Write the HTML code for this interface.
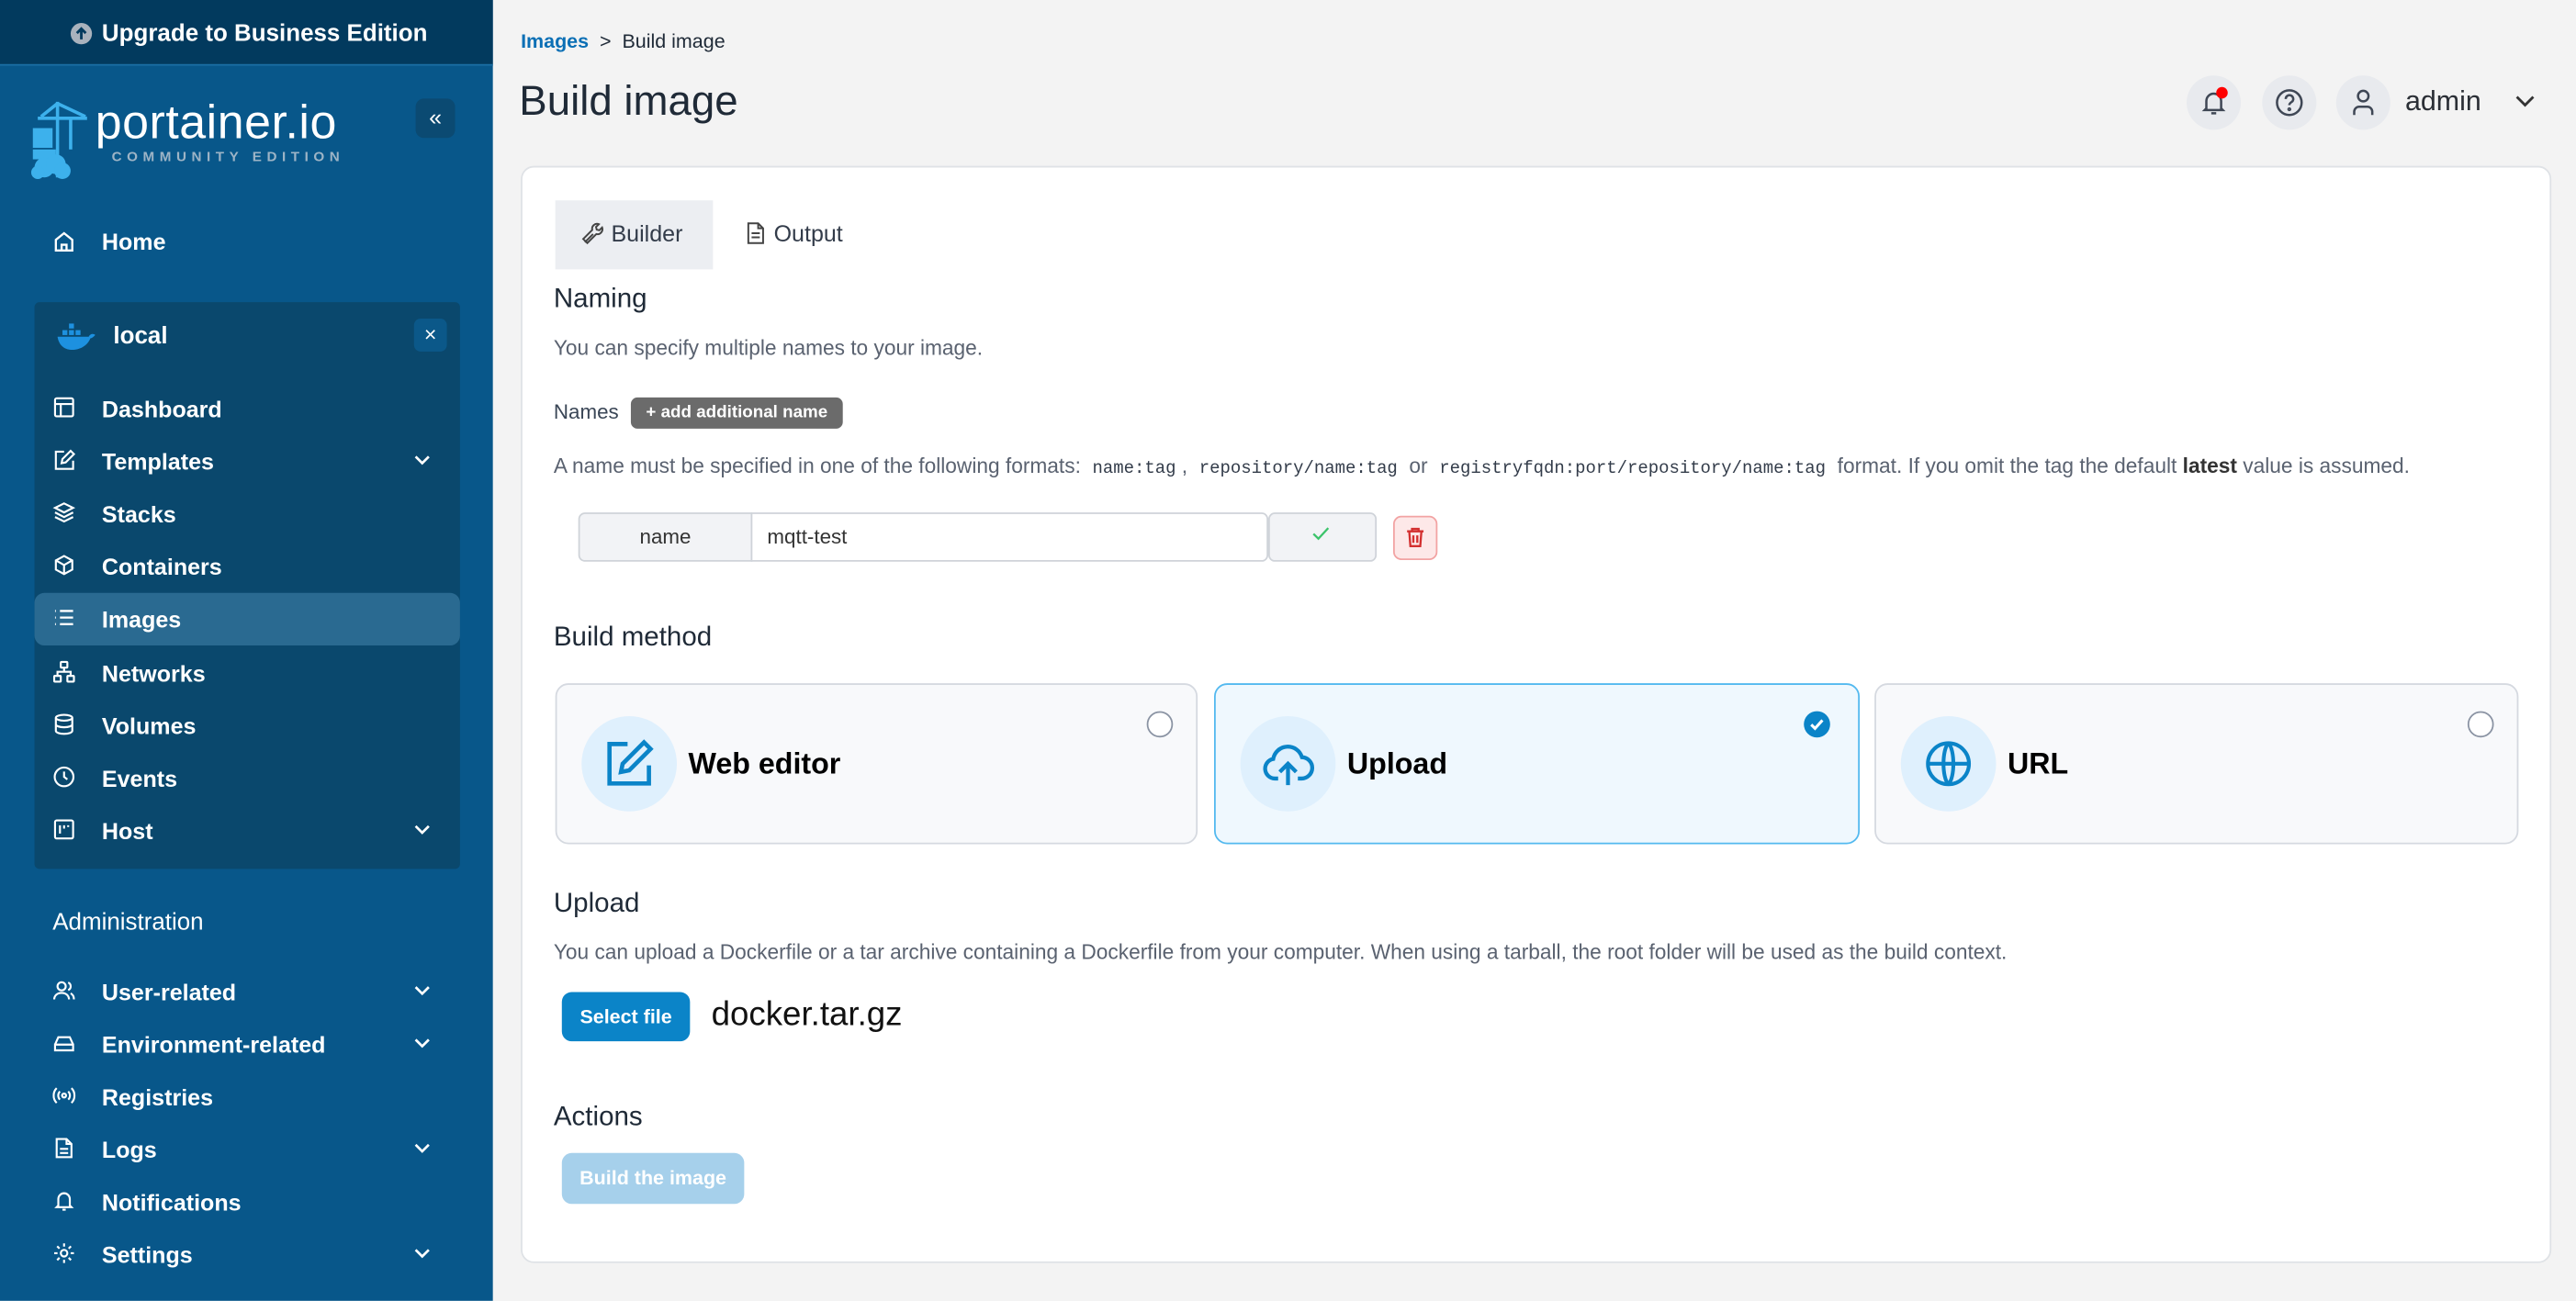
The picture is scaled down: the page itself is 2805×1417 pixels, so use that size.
<!DOCTYPE html>
<html><head><meta charset="utf-8">
<style>
*{box-sizing:border-box;margin:0;padding:0}
html,body{width:2805px;height:1416px;overflow:hidden;background:#f3f3f3;font-family:"Liberation Sans",Arial,sans-serif}
#w{position:absolute;left:0;top:0;width:1568px;height:792px;transform:scale(1.78890);transform-origin:0 0;background:#f3f3f3}
.a{position:absolute}
.t{position:absolute;white-space:nowrap;line-height:20px}
.sb{left:0;top:0;width:300px;height:792px;background:#08578a}
.nav{color:#fff;font-size:14px;font-weight:bold;left:62px}
.ic{position:absolute;left:32px;width:14px;height:14px}
.chev{position:absolute;left:251px;width:12px;height:12px}
.h{color:#1f2a37;font-size:16.5px}
.d{color:#5a6270;font-size:12.7px}
.mono{font-family:"Liberation Mono",monospace;color:#333c4a;font-size:10.6px}
.card{position:absolute;top:416px;height:98px;border:1px solid #d5d9e0;border-radius:8px;background:#f8f9fb}
.circ{position:absolute;left:15px;top:19px;width:58px;height:58px;border-radius:50%;background:#dff0fd}
.ctext{position:absolute;left:80px;top:37px;font-size:18px;font-weight:bold;color:#000;line-height:22px}
.radio{position:absolute;right:14px;top:16px;width:16px;height:16px;border-radius:50%;border:1px solid #8a93a3;background:#fff}
.hb{position:absolute;top:46px;width:33px;height:33px;border-radius:50%;background:#e8eaee}
</style></head><body><div id="w">

<!-- SIDEBAR -->
<div class="a sb"></div>
<div class="a" style="left:0;top:0;width:300px;height:40px;background:#023a5e;border-bottom:1px solid #1b6fa6"></div>
<div class="a" style="left:43px;top:14px;width:13px;height:13px;border-radius:50%;background:#a9b2bd"></div>
<svg class="a" style="left:43px;top:14px" width="13" height="13" viewBox="0 0 13 13"><path d="M6.5 10V3.5M3.8 6.2l2.7-2.7 2.7 2.7" stroke="#023a5e" stroke-width="1.6" fill="none"/></svg>
<div class="t" style="left:62px;top:11px;color:#fff;font-size:14.5px;font-weight:bold">Upgrade to Business Edition</div>

<!-- logo -->
<svg class="a" style="left:18px;top:60px" width="38" height="50" viewBox="0 0 38 50">
<path d="M17 2v46M5 12h30M17 3L7 11M17 3l17 8M25 11v20" stroke="#3db1ec" stroke-width="2" fill="none"/>
<rect x="2" y="18" width="12" height="12" fill="#3db1ec"/>
<rect x="2" y="31" width="14" height="6" fill="#3db1ec"/>
<circle cx="9" cy="42" r="6" fill="#3db1ec"/><circle cx="16" cy="40" r="6" fill="#3db1ec"/><circle cx="20" cy="44" r="5" fill="#3db1ec"/><circle cx="5" cy="45" r="4" fill="#3db1ec"/>
</svg>
<div class="t" style="left:58px;top:59px;color:#fff;font-size:29px;line-height:32px;letter-spacing:0.3px">portainer.io</div>
<div class="t" style="left:68px;top:90px;color:#9db4c6;font-size:8.5px;line-height:11px;letter-spacing:3.1px;font-weight:bold">COMMUNITY EDITION</div>
<div class="a" style="left:253px;top:60px;width:24px;height:24px;border-radius:5px;background:#0b4a72"></div>
<div class="t" style="left:253px;top:61px;width:24px;text-align:center;color:#fff;font-size:14px">«</div>

<svg class="ic" style="top:140px" viewBox="0 0 14 14" fill="none" stroke="#fff" stroke-width="1.3"><path d="M2 6l5-4 5 4v6.5H2z M5.5 12.5V9h3v3.5"/></svg>
<div class="t nav" style="top:137px">Home</div>

<!-- env box -->
<div class="a" style="left:21px;top:184px;width:259px;height:345px;background:#0a486d;border-radius:3px"></div>
<svg class="a" style="left:34px;top:196px" width="24" height="18" viewBox="0 0 24 18"><path d="M1 9h19c1-2 3-2 4-1-1 1-2 2-3 2-2 5-7 7-11 7S2 15 1 9z" fill="#1d91e0"/><rect x="4" y="5" width="3" height="3" fill="#1d91e0"/><rect x="8" y="5" width="3" height="3" fill="#1d91e0"/><rect x="12" y="5" width="3" height="3" fill="#1d91e0"/><rect x="8" y="1" width="3" height="3" fill="#1d91e0"/></svg>
<div class="t" style="left:69px;top:195px;color:#fff;font-size:14.5px;font-weight:bold">local</div>
<div class="a" style="left:252px;top:194px;width:20px;height:20px;background:#0b5889;border-radius:4px"></div>
<div class="t" style="left:252px;top:194px;width:20px;text-align:center;color:#fff;font-size:13px">×</div>

<div class="a" style="left:21px;top:361px;width:259px;height:32px;background:#2a6a91;border-radius:6px"></div>

<svg class="ic" style="top:241px" viewBox="0 0 14 14" fill="none" stroke="#fff" stroke-width="1.2"><rect x="1.5" y="1.5" width="11" height="11" rx="1"/><path d="M1.5 5h11M5 5v7.5"/></svg>
<div class="t nav" style="top:239px">Dashboard</div>
<svg class="ic" style="top:273px" viewBox="0 0 14 14" fill="none" stroke="#fff" stroke-width="1.2"><path d="M7 2H2v10.5h10.5V7.5M5.5 9l.5-2.5 5-5 2 2-5 5z"/></svg>
<div class="t nav" style="top:271px">Templates</div>
<svg class="chev" style="top:274px" viewBox="0 0 12 12"><path d="M2 4l4 4 4-4" stroke="#fff" stroke-width="1.5" fill="none"/></svg>
<svg class="ic" style="top:305px" viewBox="0 0 14 14" fill="none" stroke="#fff" stroke-width="1.2"><path d="M7 1.5l5.5 2.7L7 7 1.5 4.2zM1.5 7L7 9.8 12.5 7M1.5 9.8L7 12.5l5.5-2.7"/></svg>
<div class="t nav" style="top:303px">Stacks</div>
<svg class="ic" style="top:337px" viewBox="0 0 14 14" fill="none" stroke="#fff" stroke-width="1.2"><path d="M7 1.5l5 2.7v5.6L7 12.5 2 9.8V4.2zM2 4.2L7 7l5-2.8M7 7v5.5"/></svg>
<div class="t nav" style="top:335px">Containers</div>
<svg class="ic" style="top:369px" viewBox="0 0 14 14" fill="none" stroke="#fff" stroke-width="1.3"><path d="M4.5 3h8M4.5 7h8M4.5 11h8M1.5 3h.5M1.5 7h.5M1.5 11h.5"/></svg>
<div class="t nav" style="top:367px">Images</div>
<svg class="ic" style="top:402px" viewBox="0 0 14 14" fill="none" stroke="#fff" stroke-width="1.2"><rect x="5" y="1" width="4" height="3.5" rx=".5"/><rect x="1" y="9.5" width="4" height="3.5" rx=".5"/><rect x="9" y="9.5" width="4" height="3.5" rx=".5"/><path d="M7 4.5v2.5M3 9.5V7h8v2.5"/></svg>
<div class="t nav" style="top:400px">Networks</div>
<svg class="ic" style="top:434px" viewBox="0 0 14 14" fill="none" stroke="#fff" stroke-width="1.2"><ellipse cx="7" cy="3" rx="5" ry="1.8"/><path d="M2 3v8c0 1 2.2 1.8 5 1.8s5-.8 5-1.8V3M2 7c0 1 2.2 1.8 5 1.8S12 8 12 7"/></svg>
<div class="t nav" style="top:432px">Volumes</div>
<svg class="ic" style="top:466px" viewBox="0 0 14 14" fill="none" stroke="#fff" stroke-width="1.2"><circle cx="7" cy="7" r="5.7"/><path d="M7 3.8V7l2 1.5"/></svg>
<div class="t nav" style="top:464px">Events</div>
<svg class="ic" style="top:498px" viewBox="0 0 14 14" fill="none" stroke="#fff" stroke-width="1.2"><rect x="1.5" y="1.5" width="11" height="11" rx="1"/><path d="M4.5 4.5v5M7 4.5v2M9.5 4.5v1"/></svg>
<div class="t nav" style="top:496px">Host</div>
<svg class="chev" style="top:499px" viewBox="0 0 12 12"><path d="M2 4l4 4 4-4" stroke="#fff" stroke-width="1.5" fill="none"/></svg>

<div class="t" style="left:32px;top:552px;color:#fff;font-size:14.5px">Administration</div>

<svg class="ic" style="top:596px" viewBox="0 0 14 14" fill="none" stroke="#fff" stroke-width="1.2"><circle cx="5.5" cy="4.5" r="2.5"/><path d="M1 12.5c0-2.5 2-4 4.5-4s4.5 1.5 4.5 4M9.5 2.2a2.5 2.5 0 010 4.6M11 8.8c1.3.6 2 1.8 2 3.7"/></svg>
<div class="t nav" style="top:594px">User-related</div>
<svg class="chev" style="top:597px" viewBox="0 0 12 12"><path d="M2 4l4 4 4-4" stroke="#fff" stroke-width="1.5" fill="none"/></svg>
<svg class="ic" style="top:628px" viewBox="0 0 14 14" fill="none" stroke="#fff" stroke-width="1.2"><path d="M1.5 8h11v3.5h-11zM1.5 8l2-4.5h7l2 4.5"/></svg>
<div class="t nav" style="top:626px">Environment-related</div>
<svg class="chev" style="top:629px" viewBox="0 0 12 12"><path d="M2 4l4 4 4-4" stroke="#fff" stroke-width="1.5" fill="none"/></svg>
<svg class="ic" style="top:660px" viewBox="0 0 14 14" fill="none" stroke="#fff" stroke-width="1.2"><circle cx="7" cy="7" r="1.2"/><path d="M4.5 4.5a3.5 3.5 0 000 5M9.5 4.5a3.5 3.5 0 010 5M2.5 2.5a6.4 6.4 0 000 9M11.5 2.5a6.4 6.4 0 010 9"/></svg>
<div class="t nav" style="top:658px">Registries</div>
<svg class="ic" style="top:692px" viewBox="0 0 14 14" fill="none" stroke="#fff" stroke-width="1.2"><path d="M8.5 1.5h-6v11h9V4.5zM8.5 1.5v3h3M4.5 7.5h5M4.5 10h5"/></svg>
<div class="t nav" style="top:690px">Logs</div>
<svg class="chev" style="top:693px" viewBox="0 0 12 12"><path d="M2 4l4 4 4-4" stroke="#fff" stroke-width="1.5" fill="none"/></svg>
<svg class="ic" style="top:724px" viewBox="0 0 14 14" fill="none" stroke="#fff" stroke-width="1.2"><path d="M3.5 10V6a3.5 3.5 0 017 0v4l1 1h-9zM6 12.5h2"/></svg>
<div class="t nav" style="top:722px">Notifications</div>
<svg class="ic" style="top:756px" viewBox="0 0 14 14" fill="none" stroke="#fff" stroke-width="1.2"><circle cx="7" cy="7" r="2"/><path d="M7 1v2M7 11v2M1 7h2M11 7h2M2.8 2.8l1.4 1.4M9.8 9.8l1.4 1.4M2.8 11.2l1.4-1.4M9.8 4.2l1.4-1.4"/></svg>
<div class="t nav" style="top:754px">Settings</div>
<svg class="chev" style="top:757px" viewBox="0 0 12 12"><path d="M2 4l4 4 4-4" stroke="#fff" stroke-width="1.5" fill="none"/></svg>

<!-- HEADER -->
<div class="t" style="left:317px;top:15px;font-size:12px;color:#1f2a37"><span style="color:#0b6fb5;font-weight:bold">Images</span>&nbsp;&nbsp;&gt;&nbsp;&nbsp;Build image</div>
<div class="t" style="left:316px;top:46px;font-size:25.5px;line-height:32px;color:#1f2a37">Build image</div>
<div class="hb" style="left:1331px"></div>
<svg class="a" style="left:1339px;top:54px" width="17" height="17" viewBox="0 0 17 17" fill="none" stroke="#3f4755" stroke-width="1.4"><path d="M4 12V7.5a4.5 4.5 0 019 0V12l1 1H3zM7 15h3"/></svg>
<div class="a" style="left:1349px;top:53px;width:7px;height:7px;border-radius:50%;background:#f00"></div>
<div class="hb" style="left:1377px"></div>
<svg class="a" style="left:1384px;top:53px" width="19" height="19" viewBox="0 0 19 19" fill="none" stroke="#3f4755" stroke-width="1.4"><circle cx="9.5" cy="9.5" r="7.5"/><path d="M7.3 7.3a2.3 2.3 0 114 1.5c-.8.6-1.8 1-1.8 2.2"/><circle cx="9.5" cy="13.5" r=".5"/></svg>
<div class="hb" style="left:1422px"></div>
<svg class="a" style="left:1430px;top:53px" width="17" height="19" viewBox="0 0 17 19" fill="none" stroke="#3f4755" stroke-width="1.4"><circle cx="8.5" cy="5.5" r="3.2"/><path d="M3 17v-2a3 3 0 013-3h5a3 3 0 013 3v2"/></svg>
<div class="t" style="left:1464px;top:51px;font-size:17px;line-height:22px;color:#2b2f36">admin</div>
<svg class="a" style="left:1530px;top:56px" width="14" height="12" viewBox="0 0 14 12"><path d="M2 3l5 5 5-5" stroke="#333" stroke-width="1.6" fill="none"/></svg>

<!-- CARD -->
<div class="a" style="left:317px;top:101px;width:1236px;height:668px;background:#fff;border:1px solid #dfe2e6;border-radius:8px"></div>
<div class="a" style="left:338px;top:122px;width:96px;height:42px;background:#eceef2"></div>
<svg class="a" style="left:354px;top:135px" width="14" height="14" viewBox="0 0 14 14" fill="none" stroke="#444" stroke-width="1.1"><path d="M2 12.5L7 7.5M6.5 5a3 3 0 014-3.5L8.8 3.2l.4 1.6 1.6.4 1.7-1.7A3 3 0 019 7.5L3.5 13 1 10.5z"/></svg>
<div class="t" style="left:372px;top:132px;font-size:14px;color:#333c4a">Builder</div>
<svg class="a" style="left:454px;top:135px" width="12" height="14" viewBox="0 0 12 14" fill="none" stroke="#444" stroke-width="1.1"><path d="M7.5 1H1.5v12h9V4zM7.5 1v3h3M3.5 7h5M3.5 9.5h5"/></svg>
<div class="t" style="left:471px;top:132px;font-size:14px;color:#333c4a">Output</div>

<div class="t h" style="left:337px;top:172px">Naming</div>
<div class="t d" style="left:337px;top:202px">You can specify multiple names to your image.</div>
<div class="t" style="left:337px;top:241px;font-size:12.5px;color:#3a4656">Names</div>
<div class="a" style="left:384px;top:242px;width:129px;height:19px;background:#6b6b6b;border-radius:4px"></div>
<div class="t" style="left:384px;top:241px;width:129px;text-align:center;font-size:10.5px;color:#fff;font-weight:bold">+ add additional name</div>
<div class="t d" style="left:337px;top:274px">A name must be specified in one of the following formats:&nbsp; <span class="mono">name:tag</span> ,&nbsp; <span class="mono">repository/name:tag</span>&nbsp; or&nbsp; <span class="mono">registryfqdn:port/repository/name:tag</span>&nbsp; format. If you omit the tag the default <b style="color:#333">latest</b> value is assumed.</div>

<div class="a" style="left:352px;top:312px;width:106px;height:30px;background:#f2f3f6;border:1px solid #cfd3d9;border-radius:4px 0 0 4px"></div>
<div class="t" style="left:352px;top:317px;width:106px;text-align:center;font-size:12.5px;color:#333">name</div>
<div class="a" style="left:457px;top:312px;width:315px;height:30px;background:#fff;border:1px solid #cfd3d9;border-radius:0 4px 4px 0"></div>
<div class="t" style="left:467px;top:317px;font-size:12.5px;color:#333">mqtt-test</div>
<div class="a" style="left:772px;top:312px;width:66px;height:30px;background:#f2f3f6;border:1px solid #cfd3d9;border-radius:4px"></div>
<svg class="a" style="left:798px;top:320px" width="12" height="10" viewBox="0 0 12 10"><path d="M1.5 5l3 3 6-6.5" stroke="#3cc36b" stroke-width="1.3" fill="none"/></svg>
<div class="a" style="left:848px;top:314px;width:27px;height:27px;background:#fde8e8;border:1px solid #f2a3a3;border-radius:5px"></div>
<svg class="a" style="left:855px;top:320px" width="13" height="14" viewBox="0 0 13 14" fill="none" stroke="#d32f2f" stroke-width="1.3"><path d="M1.5 3.5h10M4.5 3.5V2h4v1.5M2.8 3.5l.7 9h6l.7-9M5.3 6v4.5M7.7 6v4.5"/></svg>

<div class="t h" style="left:337px;top:378px">Build method</div>

<div class="card" style="left:338px;width:391px">
 <div class="circ"></div>
 <svg class="a" style="left:27px;top:31px" width="34" height="34" viewBox="0 0 34 34" fill="none" stroke="#0b84c8" stroke-width="2.6"><path d="M16 5H5v24h24V18M12 22l1-5 13-13 4 4-13 13z"/></svg>
 <div class="ctext">Web editor</div><div class="radio"></div>
</div>
<div class="card" style="left:739px;width:393px;background:#eff8fe;border-color:#53b9ef">
 <div class="circ"></div>
 <svg class="a" style="left:28px;top:33px" width="32" height="32" viewBox="0 0 32 32" fill="none" stroke="#0b84c8" stroke-width="2.4"><path d="M10 24H8a6 6 0 01-1-11.9A9 9 0 0124.5 11 6.5 6.5 0 0124 24h-2M16 28V15M11 20l5-5 5 5"/></svg>
 <div class="ctext">Upload</div>
 <div class="a" style="right:17px;top:16px;width:16px;height:16px;border-radius:50%;background:#0b84c8"></div>
 <svg class="a" style="right:17px;top:16px" width="16" height="16" viewBox="0 0 16 16"><path d="M4.5 8.2l2.3 2.3 4.5-5" stroke="#fff" stroke-width="1.7" fill="none"/></svg>
</div>
<div class="card" style="left:1141px;width:392px">
 <div class="circ"></div>
 <svg class="a" style="left:29px;top:33px" width="30" height="30" viewBox="0 0 30 30" fill="none" stroke="#0b84c8" stroke-width="2.3"><circle cx="15" cy="15" r="12.5"/><path d="M2.5 15h25M15 2.5c-4 4-4 21 0 25M15 2.5c4 4 4 21 0 25"/></svg>
 <div class="ctext">URL</div><div class="radio"></div>
</div>

<div class="t h" style="left:337px;top:540px">Upload</div>
<div class="t d" style="left:337px;top:570px">You can upload a Dockerfile or a tar archive containing a Dockerfile from your computer. When using a tarball, the root folder will be used as the build context.</div>
<div class="a" style="left:342px;top:604px;width:78px;height:30px;background:#0b84c8;border-radius:6px"></div>
<div class="t" style="left:342px;top:609px;width:78px;text-align:center;font-size:12px;color:#fff;font-weight:bold">Select file</div>
<div class="t" style="left:433px;top:605px;font-size:20.5px;line-height:26px;color:#111">docker.tar.gz</div>

<div class="t h" style="left:337px;top:670px">Actions</div>
<div class="a" style="left:342px;top:702px;width:111px;height:31px;background:#a6d0eb;border-radius:6px"></div>
<div class="t" style="left:342px;top:707px;width:111px;text-align:center;font-size:12px;color:#fff;font-weight:bold">Build the image</div>

</div></body></html>
